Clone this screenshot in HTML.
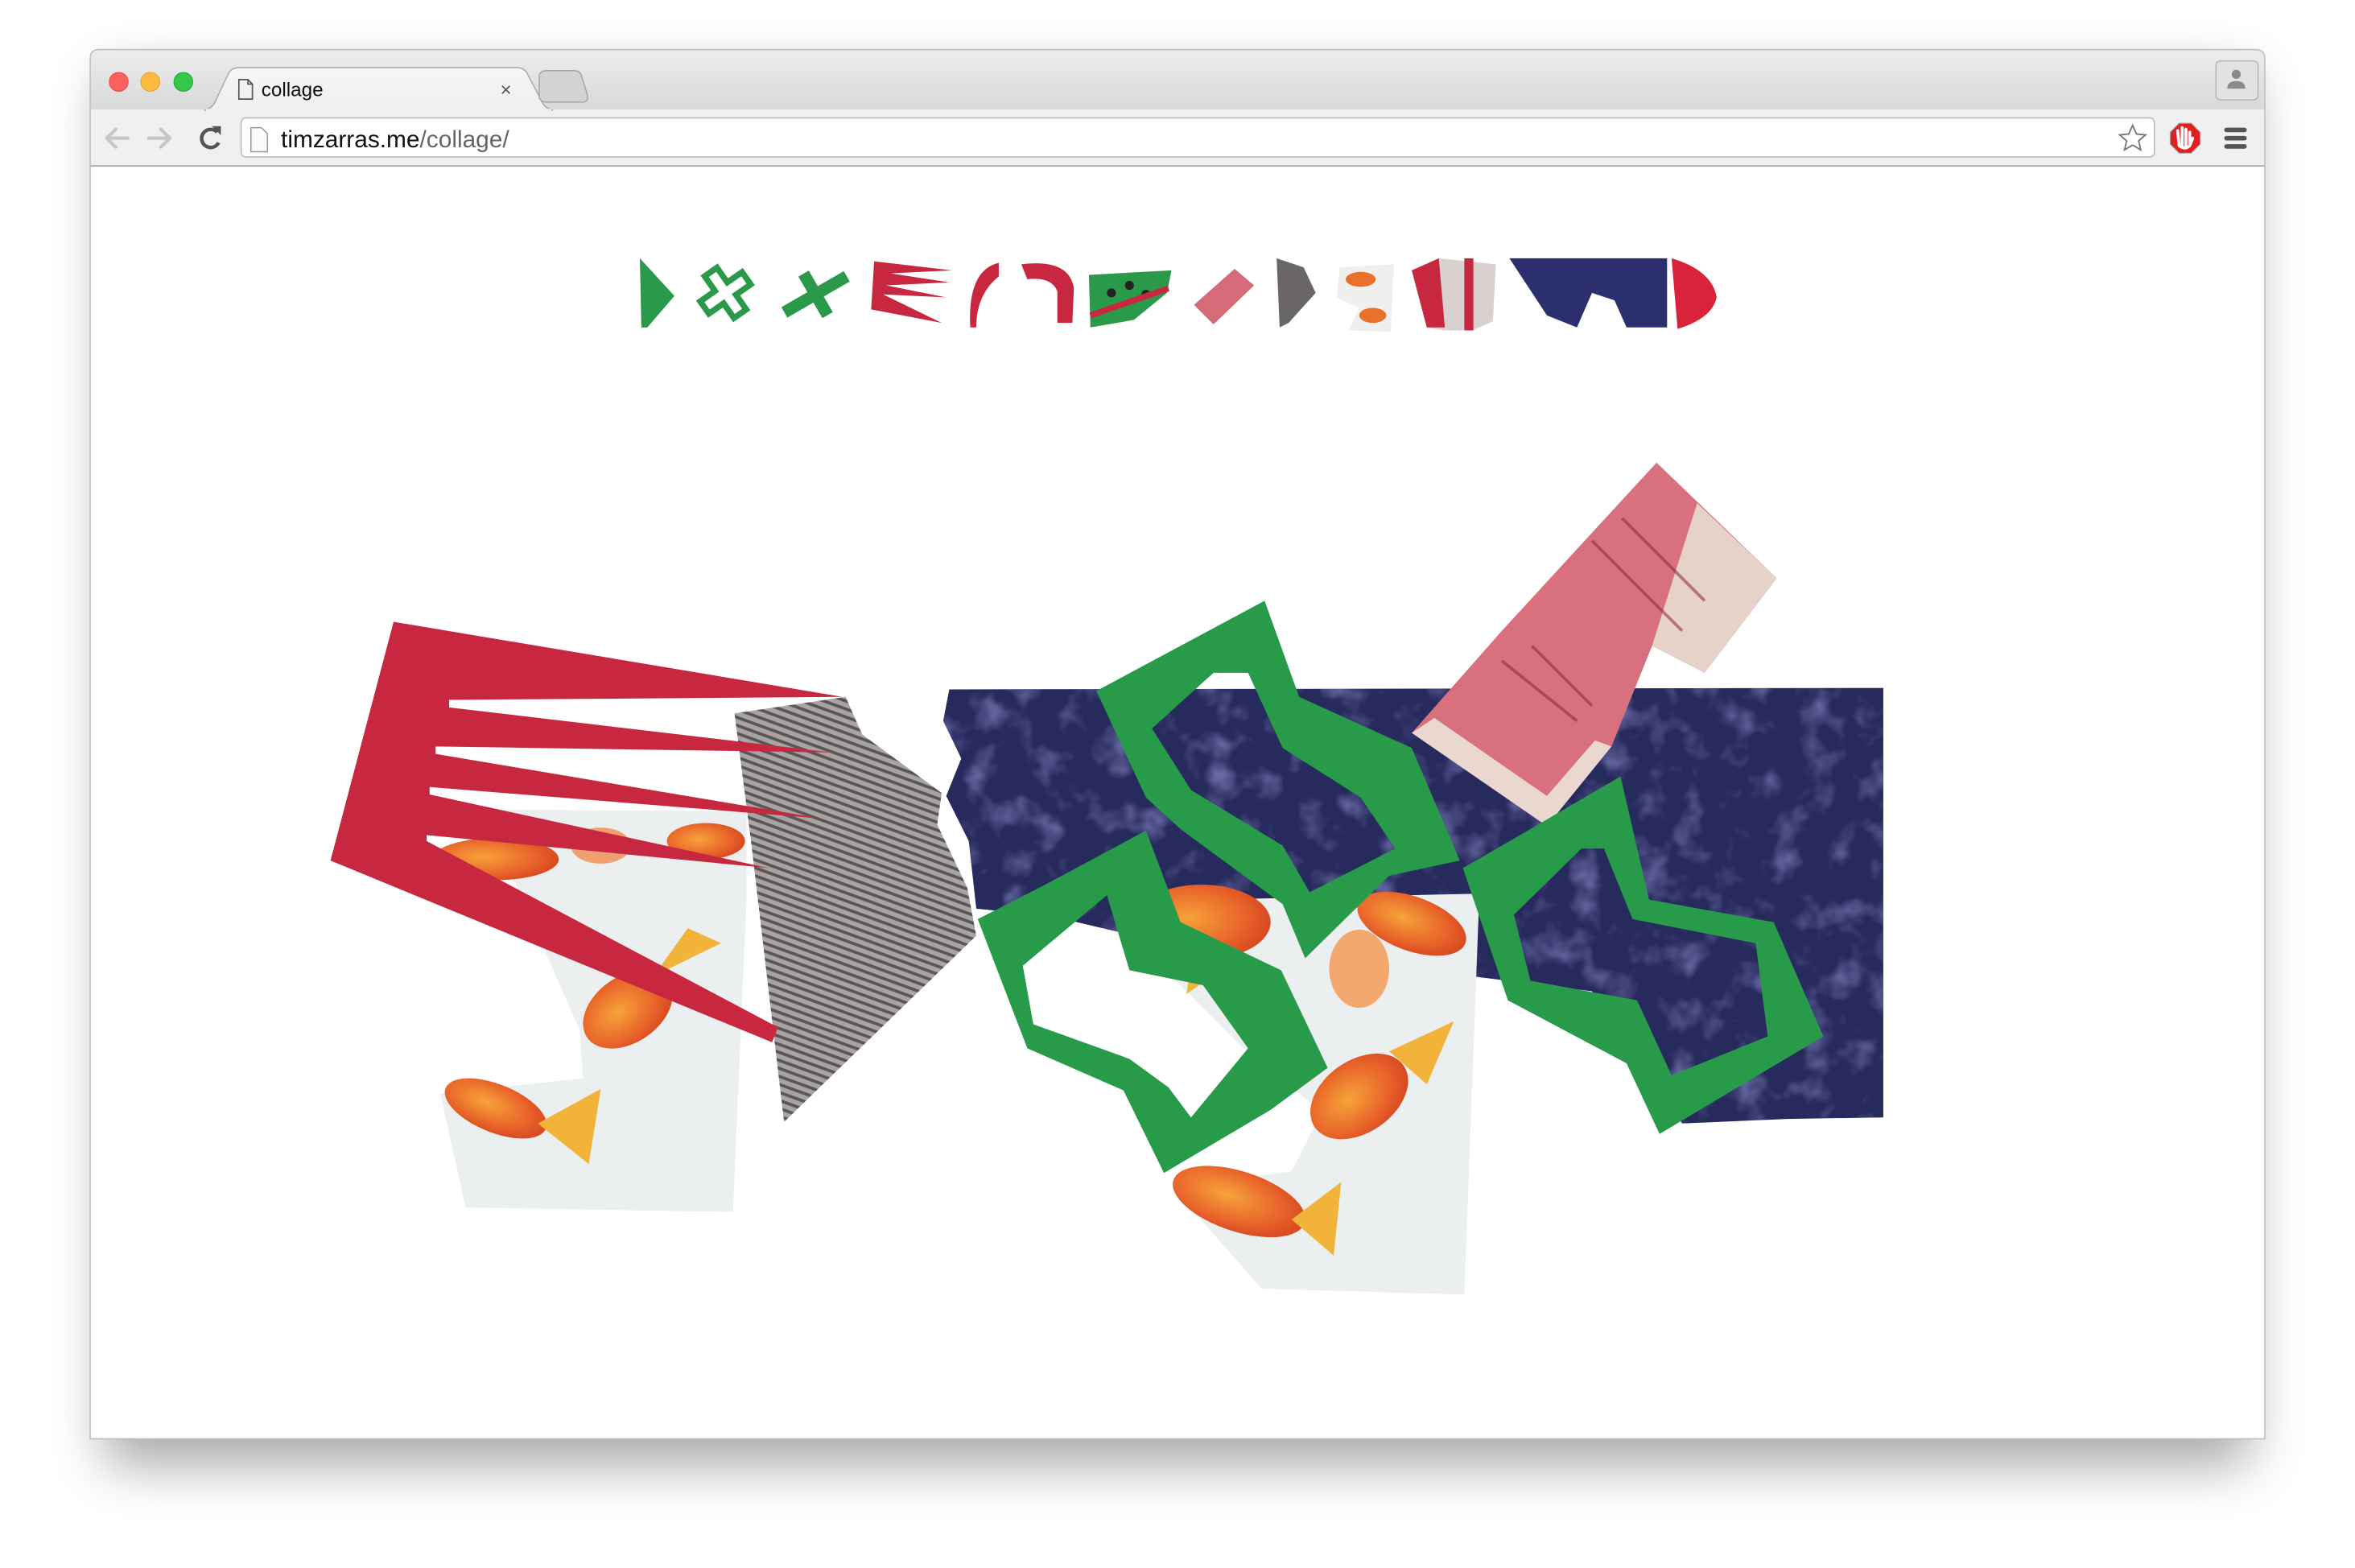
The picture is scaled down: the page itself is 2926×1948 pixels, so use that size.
<!DOCTYPE html>
<html><head><meta charset="utf-8"><style>
html,body{margin:0;padding:0;background:#fff;width:2926px;height:1948px;overflow:hidden}
svg{display:block}
text{font-family:"Liberation Sans",Arial,sans-serif}
</style></head><body>
<svg width="2926" height="1948" viewBox="0 0 1568 1044" xmlns="http://www.w3.org/2000/svg">
<defs>
<filter id="sh" x="-10%" y="-10%" width="120%" height="130%"><feGaussianBlur stdDeviation="18"/></filter>
<linearGradient id="tb" x1="0" y1="0" x2="0" y2="1"><stop offset="0" stop-color="#ececec"/><stop offset="1" stop-color="#d9d9d9"/></linearGradient>
<linearGradient id="tab" x1="0" y1="0" x2="0" y2="1"><stop offset="0" stop-color="#f6f6f6"/><stop offset="1" stop-color="#efefef"/></linearGradient>
<pattern id="knit" width="5" height="5" patternUnits="userSpaceOnUse" patternTransform="rotate(20)"><rect width="5" height="5" fill="#a8a4a4"/><rect width="5" height="2" fill="#5a5656"/></pattern>
<filter id="noise" x="0" y="0" width="100%" height="100%">
<feTurbulence type="fractalNoise" baseFrequency="0.045" numOctaves="3" seed="4"/>
<feColorMatrix type="matrix" values="0 0 0 0 0.36  0 0 0 0 0.36  0 0 0 0 0.78  0 0 0 1.4 -0.7"/>
</filter>
<radialGradient id="fish" cx="0.4" cy="0.45" r="0.6"><stop offset="0" stop-color="#f7a33a"/><stop offset="0.7" stop-color="#e8632a"/><stop offset="1" stop-color="#d94a22"/></radialGradient>
<clipPath id="blueclip"><polygon points="632,459 1254,458 1254,744 1190,745 1120,748 1060,660 900,640 870,650 700,610 650,605 645,560 630,530 640,505 628,480"/></clipPath>
</defs>
<rect x="70" y="50" width="1428" height="925" fill="#000" opacity="0.35" filter="url(#sh)"/>
<path d="M60,39 Q60,33 66,33 L1502,33 Q1508,33 1508,39 L1508,958 L60,958 Z" fill="#fff"/>
<path d="M60,39 Q60,33 66,33 L1502,33 Q1508,33 1508,39 L1508,73 L60,73 Z" fill="url(#tb)"/>
<rect x="60" y="73" width="1448" height="37" fill="#f0f0f0"/>
<line x1="60" y1="110.5" x2="1508" y2="110.5" stroke="#a8a8a8"/>
<path d="M60,39 Q60,33 66,33 L1502,33 Q1508,33 1508,39 L1508,958 L60,958 Z" fill="none" stroke="#bdbdbd" stroke-width="0.8"/>
<circle cx="79" cy="54.5" r="6.3" fill="#fc605c" stroke="#e0443e" stroke-width="0.5"/>
<circle cx="100" cy="54.5" r="6.3" fill="#fdbc40" stroke="#dea123" stroke-width="0.5"/>
<circle cx="122" cy="54.5" r="6.3" fill="#34c84a" stroke="#1aab29" stroke-width="0.5"/>
<path d="M136,73.5 Q142,72 144,66 L152,49 Q154,45 159,45 L344,45 Q349,45 351,49 L360,66 Q362,72 368,73.5 Z" fill="url(#tab)" stroke="#a9a9a9" stroke-width="0.8"/>
<rect x="137" y="72.5" width="230" height="2" fill="#f0f0f0"/>
<path d="M159,53 L165,53 L168,56 L168,66 L159,66 Z M165,53 L165,56 L168,56" fill="none" stroke="#555" stroke-width="0.9"/>
<text x="174" y="64" font-size="13" fill="#111">collage</text>
<text x="333" y="64" font-size="13" fill="#555">×</text>
<path d="M359,50 Q360,47 364,47 L382,47 Q386,47 387,50 L391,63 Q392,68 388,68 L364,68 Q360,68 359,65 Z" fill="#d3d3d3" stroke="#a5a5a5" stroke-width="0.8"/>
<rect x="1475.5" y="40.5" width="28" height="26" rx="3" fill="#e2e2e2" stroke="#b5b5b5" stroke-width="0.8"/>
<circle cx="1489" cy="49.5" r="3" fill="#8a8a8a"/><path d="M1483,59 Q1483,54 1489,54 Q1495,54 1495,59 Z" fill="#8a8a8a"/>
<path d="M71,92 L85,92 M71,92 L77,86 M71,92 L77,98" stroke="#c6c6c6" stroke-width="2.2" fill="none" stroke-linecap="round"/>
<path d="M113,92 L99,92 M113,92 L107,86 M113,92 L107,98" stroke="#c6c6c6" stroke-width="2.2" fill="none" stroke-linecap="round"/>
<path d="M144.5,88 A6,6 0 1 0 145.5,95" stroke="#555" stroke-width="2.4" fill="none"/>
<path d="M141,84 L147,84 L147,90 Z" fill="#555"/>
<rect x="160.5" y="78.5" width="1274" height="26" rx="3" fill="#fff" stroke="#b8b8b8" stroke-width="0.8"/>
<path d="M167,85 L174,85 L178,89 L178,101 L167,101 Z" fill="#fafafa" stroke="#999" stroke-width="0.8"/>
<text x="187" y="98" font-size="16" fill="#111">timzarras.me<tspan fill="#666">/collage/</tspan></text>
<path d="M1420,83.5 L1422.6,89.2 L1428.6,89.8 L1424,93.8 L1425.4,99.8 L1420,96.6 L1414.6,99.8 L1416,93.8 L1411.4,89.8 L1417.4,89.2 Z" fill="#fff" stroke="#777" stroke-width="1"/>
<polygon points="1451,82 1459,82 1465,88 1465,96 1459,102 1451,102 1445,96 1445,88" fill="#e02020" stroke="#aaa" stroke-width="0.6"/>
<path d="M1451,97 L1450,87 M1453,97 L1453,85 M1455.5,97 L1455.5,86 M1458,97 L1458,88 M1451,97 Q1455,100 1458,97 L1460,92" stroke="#fff" stroke-width="2" fill="none" stroke-linecap="round"/>
<rect x="1481" y="85" width="15" height="3" rx="1.5" fill="#555"/><rect x="1481" y="90.5" width="15" height="3" rx="1.5" fill="#555"/><rect x="1481" y="96" width="15" height="3" rx="1.5" fill="#555"/>

<!-- thumbnails -->
<polygon points="426,172 449,197 431,218 427,218" fill="#2a9a4a"/>
<g transform="translate(483,195) rotate(-35)" fill="none" stroke="#2a9a4a" stroke-width="4"><path d="M-5,-17 L5,-17 L5,-5 L17,-5 L17,5 L5,5 L5,17 L-5,17 L-5,5 L-17,5 L-17,-5 L-5,-5 Z"/></g>
<g transform="translate(543,196) rotate(-30)" fill="#2a9a4a"><rect x="-24" y="-4" width="48" height="8"/><rect x="-4" y="-16" width="8" height="32"/></g>
<polygon points="582,174 634,180 593,182 632,188 590,190 630,198 588,196 627,215 580,206" fill="#c8283f"/>
<path d="M665,175 Q644,180 646,218 L650,218 Q650,196 665,184 Z" fill="#c8283f"/>
<path d="M680,176 Q712,172 715,192 L714,215 L704,215 L704,194 Q700,184 684,186 Z" fill="#c8283f"/>
<polygon points="725,183 780,180 777,195 755,213 726,218" fill="#2a9a4a"/><circle cx="740" cy="195" r="3" fill="#222"/><circle cx="752" cy="190" r="3" fill="#222"/><circle cx="763" cy="196" r="3" fill="#222"/><path d="M726,210 L778,192" stroke="#c8283f" stroke-width="4"/>
<polygon points="795,203 822,179 835,190 808,216" fill="#d56a78"/>
<polygon points="850,172 868,178 876,195 858,215 852,218" fill="#6a6666"/>
<polygon points="892,178 928,176 926,221 898,220 905,205 890,198" fill="#efefef"/><ellipse cx="906" cy="186" rx="10" ry="5" fill="#e8702a"/><ellipse cx="914" cy="210" rx="9" ry="5" fill="#e8702a"/>
<polygon points="940,180 958,172 996,176 994,214 980,220 962,220 950,218" fill="#d9d0d0"/><path d="M940,180 L958,172 L962,218 L950,218 Z" fill="#c8283f"/><rect x="975" y="172" width="6" height="48" fill="#c8283f"/>
<polygon points="1005,172 1110,172 1110,218 1083,218 1075,200 1060,195 1050,218 1030,210" fill="#2b2f6e"/>
<path d="M1113,172 Q1140,180 1143,198 Q1140,212 1117,219 Z" fill="#d8233a"/>

<!-- blue backdrop -->
<g clip-path="url(#blueclip)">
<rect x="620" y="450" width="640" height="310" fill="#272a5c"/>
<rect x="620" y="450" width="640" height="310" filter="url(#noise)"/>
</g>
<!-- left fish paper -->
<polygon points="310,539 497,540 497,600 488,807 310,804 293,728 388,718 386,686 342,586" fill="#eceff0"/>
<ellipse cx="330" cy="738" rx="36" ry="16" fill="url(#fish)" transform="rotate(22 330 738)"/><path d="M358,748 L400,725 L392,775 Z" fill="#f2b33a"/>
<ellipse cx="418" cy="672" rx="33" ry="22" fill="url(#fish)" transform="rotate(-35 418 672)"/><path d="M435,650 L480,628 L458,618 Z" fill="#f2b33a"/>
<ellipse cx="330" cy="572" rx="42" ry="14" fill="url(#fish)"/><ellipse cx="400" cy="563" rx="20" ry="12" fill="#f0a070"/><ellipse cx="470" cy="560" rx="26" ry="12" fill="url(#fish)"/>
<!-- knit -->
<polygon points="489,475 563,464 574,489 627,528 624,549 644,591 650,623 522,747 500,560" fill="url(#knit)"/>
<!-- red comb -->
<polygon points="262,414 561,464 299,466 299,471 554,501 290,497 290,502 547,545 286,524 286,529 512,578 284,556 284,560 518,684 514,694 220,573" fill="#c8283f"/>
<!-- center fish paper -->
<polygon points="760,600 985,595 975,862 840,858 780,790 860,780 880,740 830,700 770,640" fill="#eceff0"/>
<ellipse cx="800" cy="614" rx="46" ry="25" fill="url(#fish)"/><path d="M795,628 L790,662 L820,640 Z" fill="#f2b33a"/>
<ellipse cx="905" cy="730" rx="36" ry="24" fill="url(#fish)" transform="rotate(-35 905 730)"/><path d="M925,700 L968,680 L950,722 Z" fill="#f2b33a"/>
<ellipse cx="825" cy="800" rx="46" ry="20" fill="url(#fish)" transform="rotate(18 825 800)"/><path d="M860,812 L893,787 L888,836 Z" fill="#f2b33a"/>
<ellipse cx="940" cy="615" rx="38" ry="18" fill="url(#fish)" transform="rotate(20 940 615)"/><ellipse cx="905" cy="645" rx="20" ry="26" fill="#f3a870"/>
<!-- pink office photo -->
<polygon points="1103,308 1183,385 1135,448 1100,430 1073,497 1030,550 940,488 1000,420" fill="#d8707e"/>
<polygon points="1130,335 1183,385 1135,448 1100,430" fill="#e6d2c8"/>
<polygon points="1073,497 1030,550 940,488 955,478 1030,530 1062,493" fill="#e9d7d0"/>
<g stroke="#8a2a30" stroke-width="2" opacity="0.55"><line x1="1060" y1="360" x2="1120" y2="420"/><line x1="1080" y1="345" x2="1135" y2="400"/><line x1="1000" y1="440" x2="1050" y2="480"/><line x1="1020" y1="430" x2="1060" y2="470"/></g>
<!-- green zigzags -->
<g fill="#289b4b" fill-rule="evenodd">
<path d="M842,400 L865,464 L940,498 L972,573 L925,583 L869,638 L854,602 L786,552 L763,531 L730,460 L773,437 Z M808,448 L831,448 L854,498 L906,531 L929,565 L872,594 L854,563 L793,526 L767,485 Z"/>
<path d="M763,553 L786,614 L853,646 L884,711 L846,739 L775,781 L748,726 L684,698 L651,612 L696,589 Z M737,596 L752,646 L801,656 L831,698 L793,744 L778,724 L752,705 L688,682 L681,643 Z"/>
<path d="M1079,517 L1098,599 L1181,614 L1214,690 L1105,755 L1083,708 L1004,666 L974,578 L1019,552 Z M1053,565 L1068,565 L1087,612 L1169,628 L1177,690 L1113,716 L1090,666 L1019,653 L1008,609 Z"/>
</g>
</svg>
</body></html>
